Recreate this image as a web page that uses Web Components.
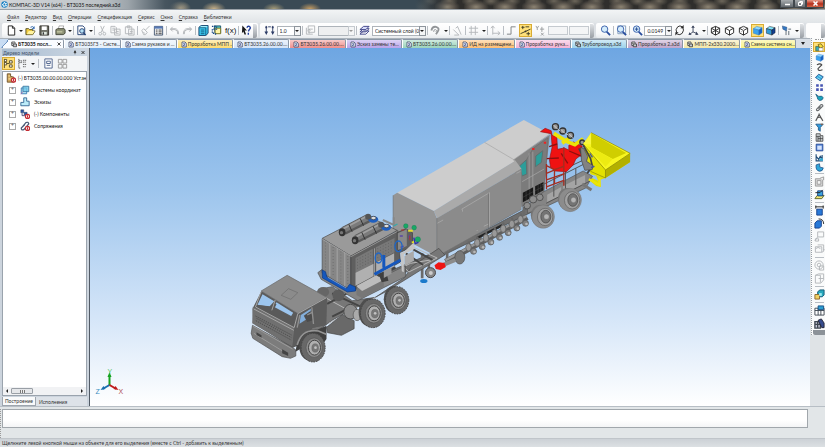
<!DOCTYPE html>
<html lang="ru">
<head>
<meta charset="utf-8">
<title>КОМПАС-3D V14 (x64) - БТ3035 последний.a3d</title>
<style>
html, body { height: 100%; margin: 0; overflow: hidden; background: #e3e7ea; }
body { font: 5px/8px Lato, Roboto, sans-serif; color: #222; }
</style>
</head>
<body>
<kompas-app></kompas-app>
<script>
const reset = `:host,*{box-sizing:border-box} button,select,input{font:inherit;color:inherit;border:0;background:none;padding:0;margin:0;appearance:none;border-radius:0;min-width:0} svg{display:block}`;

/* Glyphs share a 24-unit grid */
const K = 'fill="none" stroke="#222" stroke-width="2"', G = 'fill="none" stroke="#b4b7ba" stroke-width="2"';
const cube = (a, b, c, s) => `<path fill="${a}" stroke="${s}" d="M3 8l7-5 12 3-7 5z"/><path fill="${b}" stroke="${s}" d="M3 8l12 3v11L3 18z"/><path fill="${c}" stroke="${s}" d="M15 11l7-5v11l-7 5z"/>`;
const lens = `<path stroke="#284c9c" stroke-width="4" d="M14 14l8 8"/><circle cx="10" cy="9" r="7" fill="#d4ecfb" stroke="#365ca8" stroke-width="2"/>`;
const wire = x => `<path fill="#fff" stroke="#222" stroke-width="2" d="M3 7l9-4 9 4v10l-9 5-9-5z"/><path ${K} d="M3 7l9 5 9-5M12 12v10"/>${x}`;
const glyphs = {
  logo: '<circle cx="12" cy="12" r="11" fill="#1d82c4"/><path fill="none" stroke="#fff" stroke-width="3" d="M12 4l2 5 5-1-3 4 3 5-6-1-3 4-1-6-5-1 5-3z"/>',
  new: '<path fill="#fff" stroke="#1c1c1c" stroke-width="2" d="M5 2h9l5 5v15H5z"/><path fill="none" stroke="#222" stroke-width="2" d="M14 2v5h5"/>',
  open: '<path fill="#f3ce43" stroke="#555022" stroke-width="2" d="M2 21V8h6l2 2h7v3h5l-5 8z"/><path fill="#fff29e" d="M4 20l4-7h13l-4 7z"/><path fill="none" stroke="#2862aa" stroke-width="2" d="M12 5q5-4 8 2m0-4v5h-5"/>',
  save: '<path fill="#6d6e64" stroke="#302f2a" stroke-width="2" d="M2 2h19v20H2z"/><path fill="#fff" d="M6 3h11v8H6z"/><path fill="#dfe7de" d="M6 15h11v6H6z"/><path fill="#333" d="M8 16h3v5H8z"/>',
  print: '<path fill="#fff" stroke="#555" d="M7 9l2-7h10l-2 7z"/><path fill="#8e9276" stroke="#44463a" stroke-width="2" d="M2 10l4-2h14l2 3v7l-4 3H2z"/><path fill="#dddeb8" d="M4 14h12v2H4z"/>',
  preview: '<path fill="#fff" stroke="#224073" stroke-width="2" d="M4 2h11l4 4v15H4z"/><circle cx="13" cy="13" r="5" fill="#b5e0f6" stroke="#224073" stroke-width="2"/><path stroke="#224073" stroke-width="3" d="M16 17l5 5"/>',
  cut: `<path ${G} d="M8 2l6 14M16 2L9 16"/><circle cx="7" cy="19" r="3" ${G}/><circle cx="16" cy="19" r="3" ${G}/>`,
  copy: `<path ${G} d="M2 3h9l3 3v11H2zM5 7h6M5 11h6M10 9h12v13H10zM13 14h6M13 18h6"/>`,
  paste: `<path ${G} d="M3 4h14v15H3zM7 2h6v4H7zM10 9h12v13H10zM13 14h6M13 18h6"/>`,
  brush: `<path ${G} d="M21 2l-9 9M4 12l4-4 8 8-4 5H8zM7 15l4 4"/>`,
  props: '<path fill="#fff" stroke="#42546f" stroke-width="2" d="M3 3h18v19H3z"/><path fill="#587ab5" d="M3 3h18v5H3z"/><path stroke="#333" stroke-width="2" d="M6 11h4m2 0h7M6 15h4m2 0h7M6 19h4m2 0h7"/>',
  undo: `<path ${G} d="M8 4L3 9l5 5M3 10h10q7 1 6 10M4 8h9q8 1 8 12"/>`,
  redo: `<path ${G} d="M16 4l5 5-5 5M21 10H11q-7 1-6 10M20 8h-9q-8 1-8 12"/>`,
  box: '<path fill="#3ccbf1" stroke="#113d68" stroke-width="2" d="M2 5l5-4h15v17l-5 5H2z"/><path fill="#a4f2ff" d="M7 2h14l-4 4H3z"/><path stroke="#115a80" stroke-width="2" fill="none" d="M3 6h14v16M6 11h8M6 15h8M6 19h8"/>',
  lib: '<path fill="#4fc4c6" stroke="#185168" stroke-width="2" d="M7 2h14v16H9z"/><path fill="#fff3a5" stroke="#7c7724" stroke-width="2" d="M9 7h12v12H9z"/><path fill="none" stroke="#164887" stroke-width="3" stroke-dasharray="3 2" d="M2 3h10v6H3v9h5l4 4"/>',
  help: '<path fill="#181818" d="M3 1l10 11-5 0 3 8-3 1-3-7-3 4z"/><path fill="none" stroke="#233f9b" stroke-width="3" d="M13 6q1-4 5-3 5 3 0 7l-2 4M16 17v4"/>',
  step: '<path fill="none" stroke="#2d3c66" stroke-width="2" d="M5 2v14M19 2v14M9 4h6"/><path fill="#2d3c66" d="M1 14h8l-4 8zM15 14h8l-4 8zM3 3h4v4H3zM17 3h4v4h-4z"/>',
  frame: `<path ${G} d="M7 2h14v14H7zM3 6v14h14M9 19V9h8M6 12l3-3 3 3"/>`,
  layers: '<path fill="#fff" stroke="#3b3f86" stroke-width="2" d="M2 20l8-7h12l-7 7zM2 15l8-7h12l-7 7z"/><path fill="#d7dcf9" stroke="#3b3f86" stroke-width="2" d="M2 10l8-7h12l-7 7z"/>',
  magnet: '<path fill="none" stroke="#929598" stroke-width="4" d="M3 12q2-9 10-8 9 3 4 10l-4 6"/><path fill="none" stroke="#929598" stroke-width="2" d="M8 15q0-6 4-5 4 1 1 5"/>',
  angle: `<path ${G} d="M3 10L15 22H5M12 3l8 18M8 7l5-4"/>`,
  grid: `<path ${G} d="M7 2v20M16 2v20M2 7h20M2 16h20"/>`,
  lcs: `<path ${G} d="M6 21V3M2 7l4-5 4 5M6 18h15M17 14l5 4-5 4"/>`,
  ortho: '<path fill="none" stroke="#7b7e80" stroke-width="2" d="M2 20h9V4h10"/>',
  snap: '<path fill="none" stroke="#3d3a21" stroke-width="2" d="M1 19L23 9M3 5h7M6 2v7M14 19h8M18 15v8M12 4h8"/><circle cx="12" cy="14" r="2" fill="#333"/>',
  yx: '<path fill="none" stroke="#979a9c" stroke-width="2" d="M2 2l3 5 3-5M5 7v4M15 4v11M11 9h9M13 17l6 6M19 17l-6 6"/>',
  lens: lens, lensPage: '<path fill="#fff" stroke="#7e9aba" stroke-width="2" d="M4 2h17v17H4z"/>' + lens,
  lensPlus: lens + '<path stroke="#234993" stroke-width="2" d="M6 9h8M10 5v8"/>',
  rotate: '<path fill="none" stroke="#242424" stroke-width="2" d="M18 4q-5-4-10 0-6 6-2 13M7 20q6 3 11-2 5-7 1-13"/><path fill="#242424" d="M14 7h7V0zM10 16H3v7z"/>',
  axes: '<path fill="none" stroke="#3c455c" stroke-width="2" d="M11 2v13l-7 5M11 15l9 4"/><path fill="#3c455c" d="M7 6l4-5 4 5zM18 14l5 7-7 1zM1 22l2-6 5 5z"/>',
  wireA: wire(`<path ${K} d="M12 3v10M3 17l9-5 9 5"/>`), wireB: wire(''), wireC: wire('<path stroke="#999" stroke-width="2" stroke-dasharray="2" d="M12 3v9M3 17l9-5"/>'),
  solid: cube('#8ed7ff', '#3aa2ef', '#1762c4', '#2a79c8'), solidEdge: cube('#82e1fb', '#319ad8', '#123e92', '#111'),
  view: '<path fill="#3578c3" stroke="#2c4e79" d="M3 2l10 3-1 8-8-4z"/><path fill="none" stroke="#57646d" stroke-width="2" d="M11 12v10M16 9h6M17 13v9"/>',
  doc: '<path fill="#fff" stroke="#333d62" stroke-width="3" d="M4 2h12l5 5v15H4z"/><path fill="none" stroke="#3b5090" stroke-width="3" d="M8 9h9l-9 8h9"/>',
  asm: '<path fill="#fff" stroke="#333" stroke-width="3" d="M3 2h13v14H3z"/><path fill="#c6c9cf" stroke="#333" stroke-width="3" d="M9 10h13v11H9zM3 7h8"/>',
  pin: '<path fill="#333" d="M6 1h12v3h-1v8h3v3h-6v8h-4v-8H4v-3h3V4H6z"/>',
  close: '<path stroke="#222" stroke-width="5" d="M3 3l18 18M21 3L3 21"/>',
  treeA: '<path fill="#fff" stroke="#574a23" stroke-width="2" d="M3 2v20M3 3h5v5H3M3 10h5v5H3M8 12h6M14 6h6v5h-6zM14 15h6v5h-6z"/>',
  treeB: '<path fill="none" stroke="#555" stroke-width="2" stroke-dasharray="3 1" d="M4 2v20h4M4 6h6v4H4M13 5h8M13 9h6M13 14h8M13 19h6"/>',
  relA: '<path fill="#fff" stroke="#4b618b" stroke-width="2" d="M4 2h16v20H4zM8 7h8v5H8zM8 16h8"/>',
  relB: `<path fill="none" stroke="#999" stroke-width="2" d="M3 3h8v8H3zM13 3h8v8h-8zM3 14h8v8H3zM13 14h8v8h-8z"/>`,
  root: '<path fill="#cda55a" stroke="#694c27" stroke-width="2" d="M3 2h8v6l8 2v12H3z"/><path fill="#f1d189" d="M6 5h3v4H6zM6 12h5v4H6z"/><circle cx="18" cy="17" r="5" fill="#fff" stroke="#c42c34" stroke-width="3"/><path stroke="#b00" stroke-width="2" d="M18 14v6"/>',
  coord: '<path fill="#c2eefc" stroke="#2c72af" stroke-width="2" d="M3 7h13v14H3z"/><path fill="#6ec6e6" fill-opacity=".8" stroke="#36759f" stroke-width="2" d="M7 3h14v13H7z"/><path stroke="#b060a0" stroke-width="2" d="M7 16l-5 6"/>',
  sketch: '<path fill="#bdecf9" stroke="#285c8b" stroke-width="2" d="M9 2h7v8h6v11H2v-8h7z"/>',
  parts: '<path fill="#2f58a7" stroke="#234" d="M2 2h7v7H2zM10 8h7v7h-7z"/><path fill="none" stroke="#336" stroke-width="2" d="M5 10v6h6"/><circle cx="18" cy="18" r="5" fill="#fff" stroke="#c42c34" stroke-width="3"/><path stroke="#b00" stroke-width="2" d="M18 15v6"/>',
  mates: '<path fill="none" stroke="#465672" stroke-width="3" d="M3 17L14 4q6-3 7 3L10 20q-7 4-7-3l9-9"/><circle cx="18" cy="18" r="5" fill="#fff" stroke="#c42c34" stroke-width="3"/><path stroke="#b00" stroke-width="2" d="M18 15v6"/>',
  edit: '<path fill="#32adbb" stroke="#5d6434" stroke-width="2" d="M2 9h9v12H2z"/><path fill="#f5df39" stroke="#6d5715" stroke-width="2" d="M8 4l8-2 6 8-9 4z"/><path fill="#fff" stroke="#555" d="M10 13h11v8H10z"/>',
  spline: '<path fill="none" stroke="#444" stroke-width="3" d="M5 5q9-5 13 0L8 15q0 8 12 3"/>',
  surf: '<path fill="#33a8dc" stroke="#184987" stroke-width="2" d="M1 12l9-9 12 7-8 11z"/><path stroke="#a5edff" stroke-width="2" d="M5 12l9 5M9 7l9 5"/>',
  array: '<path fill="#4654b2" d="M3 3h7v7H3zM14 3h7v7h-7zM3 14h7v7H3zM14 14h7v7h-7z"/>',
  fish: '<path fill="#1ba5bd" stroke="#19547b" stroke-width="2" d="M2 3l8 6q10-3 12 4-3 8-10 7-6-2-6-9z"/>',
  clip: '<path fill="none" stroke="#6b6e70" stroke-width="3" d="M4 17L15 5q6-2 6 3L9 20q-6 1-5-3zM9 15l6-6"/>',
  measure: '<path fill="none" stroke="#555" stroke-width="3" d="M2 21L11 4l10 17M6 13q6-4 11 1M11 4V1"/>',
  filter: '<path fill="#2f9bde" stroke="#174a78" stroke-width="2" d="M2 3h20l-8 9v10l-5-3v-7z"/><path fill="#9a5d31" d="M15 2h7l-4 4z"/>',
  table: '<path fill="#cbd0d2" stroke="#3a3a3a" stroke-width="2" d="M3 2h11v5h7v15H3zM3 9h11M8 9v13M14 9v13M8 15h13"/>',
  disk: '<path fill="#4c7ed3" stroke="#22418b" stroke-width="2" d="M3 3h18v18H3z"/><path fill="#d5e3fb" d="M6 7h12v11H6z"/>',
  chart: '<path fill="none" stroke="#224c76" stroke-width="3" d="M3 3v18h18M3 9l7 8 4-8 5 6V5"/><path fill="#36a8d2" d="M12 14h9v7h-9z"/>',
  bend: '<path fill="#2fa6d9" stroke="#1a4c86" stroke-width="2" d="M3 5l9-3 1 9 9 2q-1 9-10 9Q1 20 3 5z"/>',
  grayBox: '<path fill="#d9d9d9" stroke="#999" stroke-width="2" d="M3 6h16v16H3z"/><path fill="#f3f3f3" stroke="#999" stroke-width="2" d="M7 10h8v8H7zM13 5l8-3v7"/>',
  plane: '<path fill="#f3e570" stroke="#59632b" stroke-width="2" d="M2 21l5-7h15l-5 7z"/><path fill="#3ba4df" stroke="#163f80" stroke-width="2" d="M8 4h11v11H8z"/><path fill="none" stroke="#222" stroke-width="2" d="M3 8h10l6-6"/>',
  extr: '<path fill="#2879d8" stroke="#153f8a" stroke-width="2" d="M6 9h12v13H6z"/><path stroke="#222" stroke-width="2" d="M3 4h18M4 1v7M20 1v7"/>',
  round: '<path fill="#2879d8" stroke="#153f8a" stroke-width="2" d="M2 11l5-5h9v12l-4 4H2z"/><path fill="none" stroke="#222" stroke-width="2" d="M10 2q11 0 11 11"/>',
  ghostA: `<path ${G} d="M8 2h13v11H8zM8 13l-6 8M3 17h7v5H3z"/>`,
  ghostB: `<path ${G} d="M3 6h14v12H3zM8 2h13v12M17 18q5 0 5-7M4 10q5-5 10 0"/>`,
  ghostC: `<circle cx="11" cy="11" r="9" ${G}/><circle cx="11" cy="11" r="4" ${G}/><path ${G} d="M12 13h9v9h-9z"/>`,
  ghostD: `<path ${G} d="M3 5l7-3h11v13l-6 7H3zM3 5h11v16M10 12h11"/>`,
  group: '<path fill="#27a8bd" stroke="#145a77" stroke-width="2" d="M8 6l5-4h9v11l-4 4H8z"/><path fill="#f1cf60" stroke="#8b672c" stroke-width="2" d="M2 12h10v10H2z"/><path fill="#9de9ef" d="M11 9h6v6h-6z"/>',
  spec: '<path fill="#fff" stroke="#3f4750" stroke-width="2" d="M2 7h20v15H2zM2 12h20M9 7v15M15 12v10"/><path fill="#2b9ed2" stroke="#174f84" stroke-width="2" d="M9 2h12v8H9z"/>',
  specB: '<path fill="#ccd" stroke="#3f4750" stroke-width="3" d="M2 8h12v14H2zM2 14h12M8 8v14"/><path fill="#374c8e" stroke="#223" stroke-width="2" d="M9 5l7-3 6 9v10h-5z"/>'
};

customElements.define('k-icon', class extends HTMLElement {
  connectedCallback() {
    const r = this.attachShadow({ mode: 'open' });
    r.innerHTML = `<style>:host{display:block;width:9px;height:9px;flex:none}svg{display:block;width:100%;height:100%}</style><svg viewBox="0 0 24 24" aria-hidden="true">${glyphs[this.getAttribute('name')]}</svg>`;
  }
});

customElements.define('k-button', class extends HTMLElement {
  connectedCallback() {
    const n = this.getAttribute('icon');
    this.attachShadow({ mode: 'open' }).innerHTML = `<style>${reset}
      :host{display:block;flex:none}
      button{display:grid;place-items:center;width:13px;height:13px}
      :host([on]) button{background:#ffe17a;border:1px solid #d9ac35}
      :host([side]) button{height:10px;width:12px}
      :host([tall]) button{height:13px}
      k-icon{width:11px;height:11px}
      :host([side]) k-icon{width:9px;height:9px}
      :host([tall]) k-icon{width:11px;height:11px}
    </style><button aria-label="${n}"><k-icon name="${n}"></k-icon></button>`;
  }
});

customElements.define('k-caret', class extends HTMLElement {
  connectedCallback() {
    this.attachShadow({ mode: 'open' }).innerHTML = `<style>${reset}:host{display:block;flex:none}button{display:grid;place-items:center;width:5px;height:13px}i{border:2px solid transparent;border-top-color:#222;border-bottom:0}</style><button aria-label="more"><i></i></button>`;
  }
});

customElements.define('k-sep', class extends HTMLElement {
  connectedCallback() {
    this.attachShadow({ mode: 'open' }).innerHTML = `<style>:host{display:block;flex:none;width:1px;height:9px;background:#b9bec4}:host([side]){width:9px;height:1px;margin:1px}:host([grip]){width:4px;height:14px;background:linear-gradient(#dfe2e5,#9a9fa5);border-radius:0 2px 2px 0}</style>`;
  }
});

customElements.define('k-combo', class extends HTMLElement {
  connectedCallback() {
    const t = this.getAttribute('value') || '';
    this.attachShadow({ mode: 'open' }).innerHTML = `<style>${reset}
      :host{display:grid;flex:none;height:9px}
      select{grid-area:1/1;border:1px solid #aeb4ba;background:#fff;padding-left:2px;width:100%}
      span{grid-area:1/1;justify-self:end;width:7px;border:1px solid #8e959c;background:#f4f5f6;display:grid;place-items:center;pointer-events:none}
      i{border:2px solid transparent;border-top-color:#222;border-bottom:0}
      :host([off]) select{background:#eeeff0}:host([off]) i{border-top-color:#999}
      :host([off]) span{border-color:#c5cacf}
    </style><select aria-label="${this.getAttribute('label')}"><option>${t}</option></select><span><i></i></span>`;
  }
});

customElements.define('k-title', class extends HTMLElement {
  connectedCallback() {
    this.attachShadow({ mode: 'open' }).innerHTML = `<style>${reset}
      :host{display:flex;align-items:center;height:10px;padding-left:1px;overflow:hidden;border-bottom:1px solid #9aa1a8;
        background:linear-gradient(90deg,#d2d6d9,#bcc2c6 100px,#9da5ab 128px,#47555f 165px,transparent 185px),
        radial-gradient(ellipse 11px 7px at 180px 8px,#b6a88c,#b6a88c00),radial-gradient(ellipse 12px 7px at 214px 9px,#c8b189,#c8b18900),
        radial-gradient(ellipse 11px 6px at 310px 9px,#c99f63,#c99f6300),radial-gradient(ellipse 11px 6px at 274px 9px,#a79c78,#a79c7800),
        linear-gradient(90deg,#3a4a55 0 415px,#3a4a5500 450px),
        radial-gradient(ellipse 13px 7px at 12px 7px,#8d8473,#5e584f 50%,#5e584f00) 0 0/29px 10px,
        radial-gradient(ellipse 9px 5px at 8px 1px,#6d675b,#6d675b00) 0 0/21px 10px #2f2e2c}
      h1{font:inherit;margin:0 0 0 1px;white-space:nowrap;flex:1;color:#111}
      k-icon{width:7px;height:7px}
      div{display:flex;align-self:start;padding-right:1px}
      button{height:8px;width:14px;border:1px solid #41474c;border-top:0;background:linear-gradient(#a7abae,#63696e);display:grid;place-items:center}
      button:nth-child(2){width:12px}button:last-child{width:18px;background:linear-gradient(#e79a88,#b52f1c 55%,#cf6446)}
      svg{width:5px;height:5px}
    </style><k-icon name="logo"></k-icon><h1>КОМПАС-3D V14 (x64) - БТ3035 последний.a3d</h1>
    <div><button aria-label="Свернуть"><svg viewBox="0 0 10 10"><path stroke="#fff" stroke-width="3" d="M0 7h10"/></svg></button><button aria-label="Развернуть"><svg viewBox="0 0 10 10"><path stroke="#fff" fill="none" stroke-width="2" d="M3 1h6v6M1 3h6v6H1z"/></svg></button><button aria-label="Закрыть"><svg viewBox="0 0 10 10"><path stroke="#fff" stroke-width="3" d="M1 1l8 8M9 1L1 9"/></svg></button></div>`;
  }
});

customElements.define('k-menu', class extends HTMLElement {
  connectedCallback() {
    this.attachShadow({ mode: 'open' }).innerHTML = `<style>${reset}
      :host{display:block;background:linear-gradient(#f2f4f5,#e0e4e7)}
      nav{display:flex;align-items:center;gap:6px;height:13px;padding-left:7px;color:#333}
      button::first-letter{text-decoration:underline}
    </style><nav>${['Файл','Редактор','Вид','Операции','Спецификация','Сервис','Окно','Справка','Библиотеки'].map(t => `<button>${t}</button>`).join('')}</nav>`;
  }
});

const items = s => s.trim().split(/\s+/).map(t => t === '|' ? '<k-sep></k-sep>' : t === 'v' ? '<k-caret></k-caret>' : t[0] === '*' ? `<k-button on icon="${t.slice(1)}"></k-button>` : `<k-button icon="${t}"></k-button>`).join('');
customElements.define('k-toolbar', class extends HTMLElement {
  connectedCallback() {
    this.attachShadow({ mode: 'open' }).innerHTML = `<style>${reset}
      :host{display:flex;height:15px;background:#dce0e4;gap:2px;padding-left:2px}
      div{display:flex;align-items:center;justify-content:space-between;background:linear-gradient(#fff,#f7f8f9 70%,#e7eaed);border-radius:2px;padding-left:3px;min-width:0}
      .a{flex:256}.b{flex:336}.c{flex:208}.d{flex:16;background:#fdfdfd}
      .fx{font:8px/12px "Liberation Sans",sans-serif;color:#111;width:13px}
      input{height:9px;width:19px;border:1px solid #c5cacf;background:#f4f5f6}
      input.w{width:20px}
      .s1{width:24px}.s2{width:37px}.s3{width:54px}.s4{width:28px}
    </style>
    <div class="a">${items('new v open save | print v | preview v | cut copy paste | brush props | undo redo | box lib')}<button class="fx">f(x)</button>${items('| help')}<k-sep grip></k-sep></div>
    <div class="b">${items('step')}<k-combo class="s1" label="Шаг" value="1.0"></k-combo>${items('| frame')}<k-combo off class="s2" label="Вид"></k-combo>${items('| layers')}<k-combo class="s3" label="Слой" value="Системный слой (0)"></k-combo>${items('| magnet v | angle | grid v | lcs | ortho *snap yx')}<input class="w" aria-label="X"><input class="w" aria-label="Y"><k-sep grip></k-sep></div>
    <div class="c">${items('lens | lensPage | lensPlus')}<k-combo class="s4" label="Масштаб" value="0.0149"></k-combo>${items('rotate axes v | wireA wireB wireC *solid solidEdge | view v')}<k-sep grip></k-sep></div>
    <div class="d"><span></span><k-sep grip></k-sep></div>`;
  }
});

customElements.define('doc-tab', class extends HTMLElement {
  connectedCallback() {
    this.attachShadow({ mode: 'open' }).innerHTML = `<style>${reset}
      :host{display:block;flex:1 1 0;min-width:0}
      button{display:flex;align-items:center;gap:1px;width:100%;height:9px;padding:0 0 0 3px;background:linear-gradient(#fff8,#fff0),var(--tint,#e4effa);border:1px solid #8b97a6;border-left-color:#fff;border-bottom:0;border-radius:0 2px 0 0;text-align:left}
      span{flex:1;white-space:nowrap;overflow:hidden}
      k-icon{width:6px;height:7px}k-icon.x{width:4px;height:4px;margin-right:2px}
      :host([active]) button{font-weight:bold;background:#fafcff;border-left:0;color:#111}
    </style><button role="tab"><k-icon name="${this.getAttribute('icon') || 'doc'}"></k-icon><span><slot></slot></span>${this.hasAttribute('active') ? '<k-icon class="x" name="close"></k-icon>' : ''}</button>`;
  }
});

customElements.define('doc-tabs', class extends HTMLElement {
  connectedCallback() {
    const t = [['БТ3035 посл...','','asm'],['БТ3035ГЗ - Систе...',''],['Схема рукавов и ...',''],['Проработка МПП ...','#ffdc6e'],['БТ3035.26.00.00....','#d3e3f7'],['БТ3035.26.00.00....','#f08f8c'],['Эскиз замены те...','#b9a3ea'],['БТ3035.26.00.00....','#9bd4bb'],['ИД на размещени...','#ffbe72'],['Проработка рука...','#f5b2d6'],['Трубопровод.a3d','#9dd3eb','asm'],['Проработка 2.a3d','#c0a5cb','asm'],['МПП-2х330.2000....','#f4e7a8','asm'],['Схема система сн...','#fbf383']];
    this.attachShadow({ mode: 'open' }).innerHTML = `<style>${reset}
      :host{display:flex;height:10px;background:#d9dfe6;border-top:1px solid #aab2ba;color:#333}
      .lead{width:8px;flex:none;background:linear-gradient(130deg,#c8dcf3 55%,#6f95c2 56% 62%,#fafcff 63%)}
      .more{width:14px;display:grid;place-items:center}i{border:2px solid transparent;border-top:3px solid #222;border-bottom:0}
    </style><span class="lead"></span>${t.map((x, i) => `<doc-tab ${i ? '' : 'active'} icon="${x[2] || 'doc'}" ${x[1] ? `style="--tint:${x[1]}"` : ''}>${x[0]}</doc-tab>`).join('')}<button class="more" aria-label="Все документы"><i></i></button>`;
  }
});

customElements.define('model-tree', class extends HTMLElement {
  connectedCallback() {
    const rows = [['coord','Системы координат'],['sketch','Эскизы'],['parts','(-) Компоненты'],['mates','Сопряжения']];
    this.attachShadow({ mode: 'open' }).innerHTML = `<style>${reset}
      :host{display:flex;flex-direction:column;width:90px;flex:none;padding:1px 2px 0 2px;background:#ccd4dd;border-right:1px solid #525b66}
      header{display:flex;align-items:center;height:7px;gap:4px;padding:0 2px 0 1px;background:linear-gradient(90deg,#a9bdd2,#cbd6e2);color:#43526a}
      header span{flex:1}header button k-icon{width:4px;height:5px}
      .bar{display:flex;align-items:center;gap:1px;height:15px;background:#f3f5f7}
      .bar k-sep{margin:0 2px}
      .tree{flex:1;display:flex;flex-direction:column;background:#fff;border:1px solid #9aa3ad;overflow:hidden;color:#111}
      ul{list-style:none;margin:0;padding:0 0 0 3px;flex:1}
      li{display:flex;align-items:center;gap:2px;height:12px;white-space:nowrap}
      li k-icon{width:10px;height:10px}
      li.n{gap:4px;padding-left:3px}
      li.n::before{content:"+";width:5px;height:5px;border:1px solid #aaa;line-height:3px;text-align:center;color:#555;flex:none}
      .scroll{display:flex;align-items:center;height:8px;background:#f1f2f4;padding:0 3px;gap:3px}
      .scroll i{border:2px solid transparent;border-right:2px solid #222;border-left:0}
      .scroll i:last-child{border-left:2px solid #222;border-right:0;margin-left:auto}
      .scroll b{width:22px;height:6px;border:1px solid #999fa6;border-radius:1px;background:repeating-linear-gradient(90deg,#777 0 1px,#eee 1px 2px) center/5px 3px no-repeat #e5e7ea}
      footer{display:flex;height:9px;background:#dde2e8;margin-top:1px}
      footer button{padding:0 3px;color:#333}footer button:first-child{background:#f9fafb;border:1px solid #9da5ae;border-top:0;padding:0 2px}
    </style>
    <header><span>Дерево модели</span><button aria-label="Закрепить"><k-icon name="pin"></k-icon></button><button aria-label="Закрыть"><k-icon name="close"></k-icon></button></header>
    <div class="bar">${items('*treeA treeB v | relA relB')}</div>
    <div class="tree"><ul><li><k-icon name="root"></k-icon><span>(-) БТ3035.00.00.00.000 Устан</span></li>${rows.map(r => `<li class="n"><k-icon name="${r[0]}"></k-icon><span>${r[1]}</span></li>`).join('')}</ul>
    <div class="scroll"><i></i><b></b><i></i></div></div>
    <footer><button>Построение</button><button>Исполнения</button></footer>`;
  }
});

/* Wheel with tyre depth, rim and hub */
const wheel = (x, y, rx, ry) => `<ellipse cx="${x - rx * .3}" cy="${y - 3}" rx="${rx * .85}" ry="${ry * .98}" fill="#4e4e4e"/><ellipse cx="${x}" cy="${y}" rx="${rx}" ry="${ry}" fill="#686868" stroke="#454545" stroke-width="3" stroke-dasharray="5 3"/><ellipse cx="${x + 3}" cy="${y}" rx="${rx * .68}" ry="${ry * .68}" fill="#8c8c8c" stroke="#555" stroke-width="2"/><ellipse cx="${x + 4}" cy="${y}" rx="${rx * .5}" ry="${ry * .52}" fill="#b0b0b0" stroke="#444" stroke-width="3"/><ellipse cx="${x + 6}" cy="${y + 1}" rx="${rx * .28}" ry="${ry * .3}" fill="#777" stroke="#555"/><circle cx="${x + 7}" cy="${y}" r="4" fill="#c2c2c2"/>`;
const smooth = (x, y) => `<ellipse cx="${x - 10}" cy="${y - 4}" rx="27" ry="32" fill="#777"/><ellipse cx="${x}" cy="${y}" rx="34" ry="35" fill="#8c8c8c" stroke="#666"/><ellipse cx="${x + 6}" cy="${y + 1}" rx="23" ry="26" fill="#a2a2a2" stroke="#5e5e5e" stroke-width="2"/><ellipse cx="${x + 8}" cy="${y}" rx="15" ry="19" fill="#747474" stroke="#444" stroke-width="2"/><circle cx="${x + 10}" cy="${y}" r="8" fill="#b5b5b5" stroke="#555"/>`;
const cyl = (x, y) => `<g transform="translate(${x} ${y})"><path stroke="#5a5a5a" stroke-width="26" d="M4 -2L78 -40"/><path stroke="#7b7b7b" stroke-width="17" d="M3 -4L76 -42"/><path stroke="#a0a0a0" stroke-width="5" d="M2 -8L74 -46"/><ellipse cx="0" cy="2" rx="10" ry="12" fill="#333"/><circle r="5" cx="-2" cy="3" fill="#777"/><path stroke="#333" stroke-width="3" d="M20 -22l10 22M54 -40l10 22"/><ellipse cx="93" cy="-37" rx="15" ry="10" fill="#1f5fc0"/><ellipse cx="94" cy="-41" rx="8" ry="5" fill="#ddd" stroke="#333" stroke-width="2"/><circle cx="78" cy="-45" r="9" fill="#555"/></g>`;
const holes = (x, y, w, h) => { let s = ''; for (let i = 0; i < w; i++) for (let j = 0; j < h; j++) s += `M${x + i * 8} ${y + j * 9 - i * 4}h2`; return `<path stroke="#505050" stroke-width="2" d="${s}"/>`; };
const pumps = () => { let s = ''; for (let i = 0; i < 7; i++) { const x = 264 + i * 26, y = 412 - i * 14; s += `<path stroke="#666" stroke-width="6" d="M${x} ${y - 18}l12 32"/><circle cx="${x + 15}" cy="${y + 12}" r="9" fill="#808080" stroke="#555" stroke-width="2"/><circle cx="${x + 18}" cy="${y + 14}" r="4" fill="#b7b7b7"/><ellipse cx="${x}" cy="${y}" rx="8" ry="11" fill="#999" stroke="#5e5e5e" stroke-width="2"/>`; } return s; };
const truck = `
<g transform="translate(380 110) scale(.3333)">
  <!-- trailer chassis -->
  <path fill="#6f6f6f" stroke="#444" stroke-width="2" d="M0 495L165 425 300 368 440 295 600 215 630 175 612 210 450 308 170 445 0 520z"/>
  <path stroke="#6a6a6a" stroke-width="8" d="M125 430v75M145 440v62M200 425v30M300 375v30M345 355v22M430 290v45M455 280v35"/>
  <path stroke="#242424" stroke-width="7" d="M290 384l75-38"/>
  <path stroke="#5f5f5f" stroke-width="17" d="M195 455L440 322"/><path stroke="#989898" stroke-width="7" d="M195 451L438 318"/>
  ${pumps()}
  <ellipse cx="238" cy="442" rx="15" ry="20" fill="#777" stroke="#4c4c4c" stroke-width="2"/>
  <path stroke="#8b8b8b" stroke-width="12" d="M190 464l35-14"/><path fill="#ed1515" d="M162 466l12-9 18 2 4 12-16 9-14-3z"/>
  <circle cx="150" cy="488" r="15" fill="#858585" stroke="#4b4b4b" stroke-width="3"/><circle cx="151" cy="489" r="6" fill="#ccc"/><ellipse cx="130" cy="513" rx="11" ry="6" fill="#1b7acb"/>
  <!-- cabin end -->
  <path fill="#858585" d="M395 150L508 74 490 245 425 292z"/>
  <path fill="#7b7b7b" stroke="#555" d="M423 175v115l68-42 12-165-45 32z"/>
  <path fill="none" stroke="#aaa" stroke-width="2" d="M446 130v130M457 125v125M425 215l66-38"/>
  <path fill="#2b9e9a" stroke="#5e706f" stroke-width="3" d="M417 168l20-18 2 42-14 6z"/><path fill="#2b9e9a" stroke="#5e706f" stroke-width="3" d="M466 138l21-16-4 35-18 13z"/>
  <path fill="#181818" d="M427 248l31-16v28l-31 17zM464 229l25-13v25l-25 14z"/><path stroke="#666" d="M427 262l31-17M464 242l25-13M437 242v28M448 237v28M473 225v25M481 221v25"/>
  <path fill="#e22" d="M455 114h7v6h-7zM490 95h7v6h-7z"/>
  <!-- main body -->
  <path fill="#cdcdcd" d="M50 248L430 30l78 42-110 78 7 3-245 150z"/>
  <path fill="none" stroke="#a4a4a4" stroke-width="2" d="M312 97l93 55M398 150l110-78"/>
  <path fill="#aaa" d="M160 303L405 152l18 24-253 149z"/>
  <path fill="#959595" d="M38 256l12-8 110 55 9 22v115l-70-38-61-40z"/>
  <path fill="#8b8b8b" d="M169 325l254-149v122L169 440z"/>
  <path fill="none" stroke="#b0b0b0" stroke-width="2" d="M243 298l84-50v103M246 298v7M170 340l18-10M408 190l12-6M290 360v3M310 349l14-7"/>
  <path fill="none" stroke="#707070" stroke-width="2" d="M324 250v104M38 256v100M169 325v115l254-142"/>
  <!-- rear platform -->
  <path fill="#858585" stroke="#555" stroke-width="2" d="M490 245l118-62 28 16-20 35-120 56-55 20v-24z"/>
  <path fill="#a4a4a4" d="M500 254l42-23v25l-42 20zM548 228l66-33v25l-66 31z"/>
  <path fill="none" stroke="#555" stroke-width="3" d="M497 280l132-67M485 225l140-70M520 205v55M555 180v64M586 175v50M545 180l75-35"/>
  <path stroke="#777" stroke-width="9" d="M605 222l28 18"/>
  <path fill="#ef1212" stroke="#9c1111" stroke-width="2" d="M480 65l14-10 18 7 3 14 14 4 2 38 20-4 14 6v-14l14-10 26 12-2 26-17 13-8 18-20 20-34-2-14-12-3-22 8-38-3-40z"/>
  <path fill="none" stroke="#8d0f0f" stroke-width="4" d="M506 110l24-8M499 146l36-2M542 130l20 30M566 123l38 16"/>
  <path fill="none" stroke="#a32e21" stroke-width="4" d="M498 162v76M522 180v42M550 112v115M498 190l52-22M498 210l52-18M498 231l52-20M498 167l24 12 28-10"/>
  <path fill="none" stroke="#ece40a" stroke-width="11" d="M520 70l38 24 25 10 25-18M545 100l27-20"/>
  <g fill="#999" stroke="#333" stroke-width="4"><circle cx="525" cy="50" r="9"/><circle cx="547" cy="63" r="9"/><circle cx="570" cy="76" r="9"/><circle cx="605" cy="97" r="7"/></g>
  <path fill="none" stroke="#ccc" stroke-width="3" d="M519 45l12 12M541 58l12 12M565 71l12 12M532 58l8 5M555 70l8 5"/>
  <!-- hopper -->
  <path fill="#e1df00" d="M608 102l24-34 117 62-1 27-73 47-16 5 2 22-14-3-18-16 6-8 18 8z"/>
  <path fill="#f7f520" d="M632 68l117 62-74 50-67-78z"/><path fill="#fff" fill-opacity=".12" d="M632 68v35l-24-1z"/>
  <path fill="#d0ce00" d="M632 70v42l65 35 40-18z"/><path fill="#edeb12" d="M632 112l64 36-21 22-57-62z"/>
  <path fill="#e3e100" d="M608 102l67 78v25l-45-12z"/>
  <path fill="#b3b000" d="M675 180l74-49v25l-74 48z"/><path fill="none" stroke="#84820c" stroke-width="2" d="M632 68l117 62-74 50-67-78M675 180v24l-45-20"/>
  <path fill="none" stroke="#ece40a" stroke-width="7" d="M625 208l32 17v-22"/>
  <!-- hinge linkage -->
  <path fill="none" stroke="#444" stroke-width="5" d="M608 105l22 40 6 25-16 20M595 115l30 60"/>
  <path fill="#828282" stroke="#444" stroke-width="2" d="M600 112l10 4 12 24-4 14 20 13-3 12-22 2-10-30z"/><path stroke="#4455a0" stroke-width="4" d="M628 130l8 12M632 173l10-4"/>
  ${smooth(488, 320)}${smooth(569, 270)}
  <g fill="#8d8d8d" stroke="#525252" stroke-width="3"><circle cx="458" cy="268" r="11"/><circle cx="478" cy="262" r="10"/><circle cx="440" cy="287" r="10"/></g>
</g>
<g transform="translate(240 200) scale(.3333)">
  <!-- frame and coupling -->
  <path fill="#777" stroke="#494949" stroke-width="2" d="M235 268l40-8 60 42 70-10 88-60 20-32 82-55 18 20-115 72-60 37-160 85-56 40-28-12v-26z"/>
  <path fill="none" stroke="#b8b8b8" stroke-width="3" d="M235 282l100 55M265 370l140-78M420 235l90-45 60-10M455 165l60-25 75 34-85 42z"/>
  <path fill="none" stroke="#454545" stroke-width="6" d="M275 280l90 42M260 312l90-48M275 350l55-28M496 160l52 35M518 148l58 32"/>
  <path fill="#696969" stroke="#444" stroke-width="2" d="M258 382l48-38 35 18v24l-38 20-42-8z"/><ellipse cx="330" cy="335" rx="20" ry="22" fill="#8c8c8c" stroke="#4d4d4d" stroke-width="3"/><ellipse cx="350" cy="345" rx="12" ry="17" fill="#aaa" stroke="#555" stroke-width="2"/>
  <ellipse cx="248" cy="276" rx="18" ry="15" fill="#666"/><circle cx="294" cy="286" r="18" fill="#5c5c5c"/>
  <path fill="#858585" stroke="#4a4a4a" stroke-width="2" d="M232 218l13-10 100 62 150-73v33L352 302l-110-64z"/>
  <!-- power unit -->
  <path fill="#9a9a9a" stroke="#4c4c4c" stroke-width="2" d="M245 115L378 46l92 45-138 78z"/>
  <path fill="#868686" stroke="#4a4a4a" stroke-width="2" d="M245 116l86 52v103l-86-52z"/>
  <path fill="#5f5f5f" stroke="#3d3d3d" stroke-width="2" d="M331 168l141-76 8 94-135 77-14 7z"/>
  <path fill="#787878" d="M345 174l52-28v46l-52 26zM406 142l56-28v43l-56 29z"/><path fill="#b0b0b0" d="M345 218l54-27v37l-54 30zM407 187l54-27v42l-54 23z"/>
  ${holes(350, 178, 6, 4)}${holes(411, 146, 6, 4)}
  <path fill="none" stroke="#b6b6b6" stroke-width="2" d="M245 117l86 52M268 132v97M290 145v100M313 158v100M331 170l140-76M402 145v85"/><path stroke="#555" stroke-width="2" stroke-dasharray="2 7" d="M255 128v90M278 142v90M301 155v92M322 168v90"/>
  <path fill="#1557bd" stroke="#0b3985" stroke-width="2" d="M245 210l10 5 4 16 60 34 8-12 18 8v12l-24 3-75-42z"/><path stroke="#9fb9e0" stroke-width="2" d="M262 232l55 32"/>
  <path stroke="#1557bd" stroke-width="9" d="M402 223l78-43M430 165v38"/>
  <path stroke="#444" stroke-width="8" d="M345 262l120-60"/>
  ${cyl(305, 95)}${cyl(344, 119)}
  <path fill="#5f5f5f" stroke="#3d3d3d" stroke-width="2" d="M470 98l26-12 20 12v42l-36 17-9-8z"/><path fill="#888" d="M472 100l27-12v50l-27 12z"/>
  <path fill="#c5c5c5" d="M480 160l10-5v62l-6-3zM515 132l7-3v18l-32 16v-7z"/><path fill="#aaa" d="M492 168l28-16v30l-28 16z"/>
  <path stroke="#5a47a5" stroke-width="4" d="M478 108h9M480 142l10-4M506 106v9"/>
  <g fill="none" stroke="#1e66c8" stroke-width="4"><ellipse cx="414" cy="174" rx="10" ry="15"/><ellipse cx="474" cy="139" rx="11" ry="16"/></g>
  <g fill="#18a865" stroke="#0b724b"><circle cx="496" cy="78" r="7"/><circle cx="521" cy="83" r="7"/><circle cx="532" cy="118" r="8"/></g>
  <path stroke="#e4df2a" stroke-width="6" d="M503 92h14M514 128l10-4"/><path stroke="#2231b1" stroke-width="4" d="M520 113l4 18 10-4"/><path stroke="#ba2e2e" stroke-width="3" d="M508 107v14M482 90h9"/>
  <path stroke="#888" stroke-width="6" d="M460 52v20M427 60l38 17"/><path stroke="#38a9aa" stroke-width="4" d="M459 78l12-6"/>
  <path fill="#777" d="M348 260v25l16 9 66-34v-23l-66 34z"/><path fill="#bcbcbc" d="M347 258l60-32 23 13-65 34z"/>
  <path fill="#3f3f3f" d="M414 222l22-10 8 30-20 5z"/><path fill="#989898" d="M430 212l23-9v18l-23 13z"/>
  ${wheel(470, 301, 35, 41)}${wheel(397, 340, 37, 43)}
  <!-- truck cab -->
  <path fill="#5c5c5c" d="M63 273l109 67 87-47-2 82-40 8-42 53-20 8-117-75-2-43z"/>
  <path fill="#9cc5ee" d="M66 283l35 21-14 16-36-6zM108 307l50 31-6 10-52-28z"/>
  <path fill="#5a5a5a" d="M50 315l38 4 12-10 8 4-6 12 54 30 4-10 6 3-8 35-115-55z"/>
  <path fill="#707070" d="M37 320l125 63-6 57L35 370z"/><path fill="#5c5c5c" d="M162 383l10-43 87-47-2 82-44 10-38 48-19 7z"/>
  <path fill="#8b8b8b" stroke="#666" stroke-width="2" d="M140 226l119 66-87 48L62 273z"/>
  <path fill="none" stroke="#6b6b6b" stroke-width="2" d="M122 286l22-20 28 12-21 20z"/><path fill="none" stroke="#a6a6a6" stroke-width="3" d="M62 275l-17 46 116 62 11-42 86-48M104 300l-10 31M40 327l120 64"/>
  <path fill="#83aeda" d="M181 345l30-19-2 25-32 20z"/><path fill="#4c4c4c" d="M190 347l20-14 8 28-18 5z"/><path fill="none" stroke="#909090" stroke-width="4" d="M178 345l-8 38M214 322l5 50M200 345l15-8"/>
  <path fill="none" stroke="#3d3d3d" stroke-width="2" stroke-dasharray="4 3" d="M48 355l105 58M46 362l106 58M45 348l108 57"/>
  <path fill="#7c7c7c" stroke="#505050" stroke-width="2" d="M36 376l120 66 10 8v18l-16 7-25-5-88-55-5-15z"/><path fill="none" stroke="#aaa" stroke-width="2" d="M38 379l118 68M40 400l86 53"/><path fill="#444" d="M125 448l18 10v10l-18-8zM48 397l15 9v7l-15-8z"/>
  <path fill="#404040" d="M165 455q8-70 65-66l28-12v40l-20 28h-55z"/><path fill="none" stroke="#949494" stroke-width="5" d="M170 435q14-50 64-42l23 10"/>
  ${wheel(218, 443, 36, 43)}
</g>`;

customElements.define('model-view', class extends HTMLElement {
  connectedCallback() {
    this.attachShadow({ mode: 'open' }).innerHTML = `<style>
      :host{display:block;flex:1;min-width:0;min-height:0;background:linear-gradient(#6ea6e2,#9dc5ed 40%,#d4e5f8 75%,#fff)}
      svg{display:block;width:100%;height:100%}
      text{font:7px "Liberation Sans",sans-serif}
    </style><svg viewBox="90 48 719 358" preserveAspectRatio="xMidYMid meet" role="img" aria-label="3D модель" fill="none">
    ${truck}
    <path stroke="#17a321" stroke-width="2" d="M109 385v-10"/><path fill="#17a321" d="M107 377l2-5 2 5z"/>
    <path stroke="#1b6fb0" stroke-width="2" d="M109 385l-7 4"/><path fill="#1b6fb0" d="M100 390l3-4 2 3z"/>
    <path stroke="#c01b1b" stroke-width="2" d="M109 385l7 4"/><path fill="#c01b1b" d="M118 390l-5-1 2-3z"/>
    <text x="107" y="374" fill="#62c568">Y</text><text x="95" y="394" fill="#3a8dbf">Z</text><text x="118" y="394" fill="#b05252">X</text></svg>`;
  }
});

customElements.define('side-tools', class extends HTMLElement {
  connectedCallback() {
    const b = (n, t = '') => `<k-button side ${t} icon="${n}"></k-button>`, s = '<k-sep side></k-sep>';
    this.attachShadow({ mode: 'open' }).innerHTML = `<style>
      :host{display:block;width:15px;flex:none;background:#dfe3e6}
      div{display:flex;flex-direction:column;align-items:center;margin-left:1px;padding:1px 0 0 1px;background:#fafbfb;border-left:1px dotted #9aa1a8}
      i{width:13px;height:5px;background:#8c9298;border-radius:0 0 2px 2px}
      b{width:8px;height:2px;border-top:1px dotted #999}
    </style><div><b></b>${b('edit','on')}${['solid','spline','surf','array','fish','clip','measure','filter','table','disk','chart','bend'].map(n => b(n)).join('')}${s}${b('grayBox','tall')}${b('plane','tall')}${s}${b('extr','tall')}${b('round','tall')}${b('ghostA','tall')}${b('ghostB','tall')}${s}${b('ghostC','tall')}${b('ghostD','tall')}${s}${b('group','tall')}${s}${b('spec','tall')}${b('specB','tall')}<i></i></div>`;
  }
});

customElements.define('k-bottom', class extends HTMLElement {
  connectedCallback() {
    this.attachShadow({ mode: 'open' }).innerHTML = `<style>${reset}
      :host{display:block;flex:none;border-top:1px solid #b7bec5;background:#e2e6e8;padding-top:2px}
      section{height:29px;padding:0 17px 10px 1px;border-left:1px dotted #999}
      section div{height:100%;border:1px solid #a1a7ac;background:linear-gradient(#fff 60%,#f4f5f6)}
      footer{height:9px;padding-left:2px;border-top:1px solid #c0c5ca;background:linear-gradient(#ccd1d6,#dce0e3);white-space:nowrap;color:#333}
    </style><section><div></div></section><footer>Щелкните левой кнопкой мыши на объекте для его выделения (вместе с Ctrl - добавить к выделенным)</footer>`;
  }
});

customElements.define('kompas-app', class extends HTMLElement {
  connectedCallback() {
    this.attachShadow({ mode: 'open' }).innerHTML = `<style>
      :host{display:flex;flex-direction:column;height:100vh}
      main,.work{display:flex;flex:1;min-height:0}
      .left{display:flex;flex-direction:column;flex:1;min-width:0}
    </style><k-title></k-title><k-menu></k-menu><k-toolbar></k-toolbar>
    <main><div class="left"><doc-tabs></doc-tabs><div class="work"><model-tree></model-tree><model-view></model-view></div></div><side-tools></side-tools></main>
    <k-bottom></k-bottom>`;
  }
});
</script>
</body>
</html>
